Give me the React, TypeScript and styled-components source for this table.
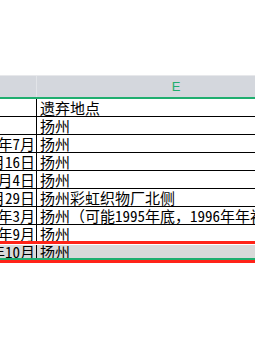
import React from "react";
import styled, { createGlobalStyle } from "styled-components";

const GlobalStyle = createGlobalStyle`
  html, body {
    margin: 0;
    padding: 0;
    background: #fff;
  }
`;

const rows = [
  { date: "", place: "遗弃地点" },
  { date: "", place: "扬州" },
  { date: "年7月", place: "扬州" },
  { date: "月16日", place: "扬州" },
  { date: "月4日", place: "扬州" },
  { date: "月29日", place: "扬州彩虹织物厂北侧" },
  { date: "年3月", place: "扬州（可能1995年底，1996年年初）" },
  { date: "年9月", place: "扬州" },
  { date: "年10月", place: "扬州", selected: true },
];

const App = () => {
  return (
    <Page>
      <GlobalStyle />
      <TopSpace />
      <HeaderBar>
        <HeadCell $width={36} />
        <HeadCell $width={278}>E</HeadCell>
      </HeaderBar>
      <Grid>
        {rows.map((r, i) => (
          <Row key={i} $selected={r.selected}>
            <DateCell>
              <CellText>{r.date}</CellText>
            </DateCell>
            <PlaceCell>
              <CellText>{r.place}</CellText>
            </PlaceCell>
          </Row>
        ))}
      </Grid>
    </Page>
  );
};

export default App;

const Page = styled.div`
  width: 255px;
  height: 340px;
  overflow: hidden;
  background: #fff;
  font-family: "Noto Sans Mono CJK SC", "Noto Sans CJK SC", monospace;
`;

const TopSpace = styled.div`
  height: 75px;
`;

const HeaderBar = styled.div`
  display: flex;
  width: 400px;
  height: 21px;
  border-top: 1px solid #e7e8eb;
  background: #d4d7dd;
  border-bottom: 2px solid #1fae6f;
`;

const HeadCell = styled.div<{ $width: number }>`
  flex: 0 0 ${(p) => p.$width}px;
  border-right: 1px solid #e2e4e8;
  display: flex;
  align-items: center;
  justify-content: center;
  font-family: "Liberation Sans", Arial, sans-serif;
  font-size: 13px;
  color: #1fae6f;
`;

const Grid = styled.div`
  display: flex;
  flex-direction: column;
  width: 400px;
`;

const Row = styled.div<{ $selected?: boolean }>`
  position: relative;
  display: flex;
  height: 17px;
  border-bottom: 1px solid #000;
  background: ${(p) => (p.$selected ? "#d9d9d9" : "#fff")};
  font-size: 15px;
  line-height: 17px;
  color: #000;

  ${(p) =>
    p.$selected &&
    `
    &::before {
      content: "";
      position: absolute;
      left: 0;
      right: 0;
      top: -2px;
      height: 3px;
      background: #ff2318;
      border-bottom: 1px solid #fff;
    }
    &::after {
      content: "";
      position: absolute;
      left: 0;
      right: 0;
      top: 15px;
      height: 2px;
      background: #1fae6f;
      border-bottom: 3px solid #ff2318;
    }
  `}
`;

const CellText = styled.span`
  display: block;
  height: 17px;
  white-space: nowrap;
`;

const DateCell = styled.div`
  flex: 0 0 35px;
  display: flex;
  justify-content: flex-end;
  overflow: hidden;
  padding-right: 1px;
  border-right: 1px solid #000;
`;

const PlaceCell = styled.div`
  flex: 1;
  padding-left: 3px;
  overflow: hidden;
`;
